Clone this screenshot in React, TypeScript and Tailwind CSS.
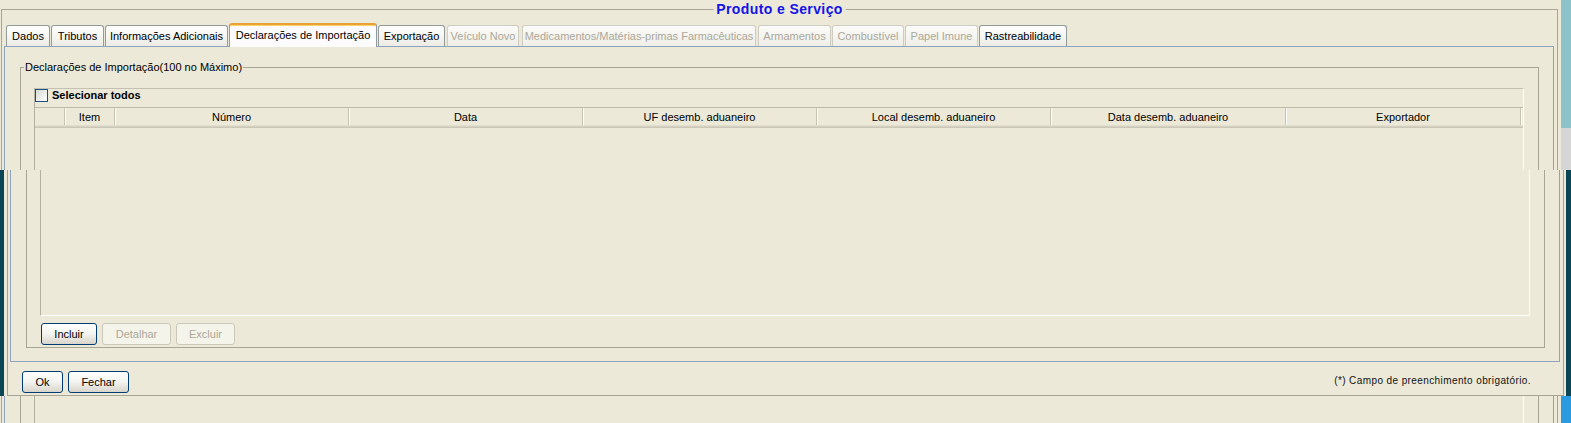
import { clsx } from "clsx"

const tabs = [
  { label: "Dados", cls: "ml-0 w-[44px]", state: "on" },
  { label: "Tributos", cls: "ml-px w-[53px]", state: "on" },
  { label: "Informações Adicionais", cls: "ml-px w-[123px]", state: "on" },
  { label: "Declarações de Importação", cls: "ml-px w-[148px]", state: "sel" },
  { label: "Exportação", cls: "ml-px w-[67px]", state: "on" },
  { label: "Veículo Novo", cls: "ml-[2px] w-[72px]", state: "off" },
  { label: "Medicamentos/Matérias-primas Farmacêuticas", cls: "ml-[3px] w-[234px]", state: "off" },
  { label: "Armamentos", cls: "ml-[2px] w-[73px]", state: "off" },
  { label: "Combustível", cls: "ml-px w-[72px]", state: "off" },
  { label: "Papel Imune", cls: "ml-px w-[73px]", state: "off" },
  { label: "Rastreabilidade", cls: "ml-px w-[88px]", state: "on" },
]

const columns = [
  { label: "", cls: "w-[30px]" },
  { label: "Item", cls: "w-[50px]" },
  { label: "Número", cls: "w-[234px]" },
  { label: "Data", cls: "w-[234px]" },
  { label: "UF desemb. aduaneiro", cls: "w-[234px]" },
  { label: "Local desemb. aduaneiro", cls: "w-[234px]" },
  { label: "Data desemb. aduaneiro", cls: "w-[235px]" },
  { label: "Exportador", cls: "w-[235px]" },
]

const font = "font-['Liberation_Sans',Arial,sans-serif] text-[11px] text-black"

function Tab({ label, cls, state }: { label: string; cls: string; state: string }) {
  if (state === "sel") {
    return (
      <div
        className={clsx(
          "relative -mb-px flex h-[24px] items-center justify-center rounded-t-[3px] border border-b-0 border-[#919b9c] border-t-2 border-t-[#e8a236] bg-[#fcfcfe] pb-[2px] shadow-[inset_0_1px_0_#ffd36a]",
          cls
        )}
      >
        {label}
      </div>
    )
  }
  return (
    <div
      className={clsx(
        "flex h-[21px] items-center justify-center rounded-t-[3px] border border-b-0",
        state === "on"
          ? "border-[#919b9c] bg-gradient-to-b from-white to-[#ecebe5] text-black"
          : "border-[#cfcdc2] bg-gradient-to-b from-[#fbfbf9] to-[#efeee8] text-[#aca899]",
        cls
      )}
    >
      {label}
    </div>
  )
}

function Button({ label, cls, disabled }: { label: string; cls: string; disabled?: boolean }) {
  return (
    <button
      className={clsx(
        "flex h-[22px] items-center justify-center rounded-[3px] border text-[11px]",
        disabled
          ? "border-[#cac8bb] bg-[#f5f4ea] text-[#aca899]"
          : "border-[#003c74] bg-gradient-to-b from-white via-[#f3f3ef] to-[#d8d5cb] text-black",
        cls
      )}
    >
      {label}
    </button>
  )
}

// the window at the back: only its top is seen, the rest runs off the page
function BackWindow() {
  return (
    <div className={clsx("flex h-[560px] w-[1561px] flex-col bg-[#ece9d8] pl-px pr-[3px] pt-[9px]", font)}>
      <div className="relative flex flex-1 flex-col border border-[#a7a596] pl-[2px] pr-[3px] pt-[13px]">
        <span className="absolute left-1/2 top-[-9px] -translate-x-1/2 bg-[#ece9d8] px-[3px] text-[14px] leading-[17px] font-bold tracking-[0.4px] text-[#1414e8]">
          Produto e Serviço
        </span>

        <div className="relative z-10 flex h-[23px] items-end pl-[2px]">
          {tabs.map((t) => (
            <Tab key={t.label} {...t} />
          ))}
        </div>

        <div className="flex flex-1 flex-col border border-[#8fa3bd] pl-[15px] pr-[14px] pt-[20px]">
          <div className="relative flex flex-1 flex-col border border-[#a7a596] pl-[13px] pr-[14px] pt-[20px]">
            <span className="absolute left-[3px] top-[-8px] bg-[#ece9d8] px-px leading-[14px]">
              Declarações de Importação(100 no Máximo)
            </span>

            <div className="flex flex-1 flex-col border border-t-[#c4c1b2] border-l-[#b3b0a1] border-r-white border-b-white">
              <div className="flex h-[18px] items-start">
                <div className="h-[13px] w-[13px] border border-[#1c5180] bg-gradient-to-br from-[#d8d8d2] to-white" />
                <span className="ml-[4px] font-bold leading-[13px]">Selecionar todos</span>
              </div>
              <div className="flex flex-col border-t border-[#bdbaab]">
                <div className="flex h-[17px]">
                  {columns.map((c, i) => (
                    <div
                      key={i}
                      className={clsx(
                        "flex items-center justify-center border-r border-[#c6c3b3] pt-px shadow-[1px_0_0_#fff]",
                        c.cls
                      )}
                    >
                      {c.label}
                    </div>
                  ))}
                </div>
                <div className="h-[3px] border-t border-[#e2decd] bg-[#d6d2c2] shadow-[inset_0_-1px_0_#cbc7b8]" />
              </div>
              <div className="flex-1" />
            </div>
          </div>
        </div>
      </div>
    </div>
  )
}

// the window in front: only its lower part got painted
function FrontWindowLower() {
  return (
    <div className={clsx("ml-[4px] flex h-full w-[1562px] flex-col bg-[#ece9d8] pl-[3px] pr-[2px]", font)}>
      <div className="flex flex-1 flex-col border border-t-0 border-[#a7a596] pl-[2px] pr-[3px] pb-[2px]">
        <div className="flex flex-1 flex-col border border-t-0 border-[#8fa3bd] pl-[15px] pr-[14px] pb-[13px]">
          <div className="flex flex-1 flex-col border border-t-0 border-[#a7a596] pl-[13px] pr-[14px] pb-[2px]">
            <div className="flex-1 border border-t-0 border-l-[#b3b0a1] border-r-white border-b-white" />

            <div className="mt-[7px] flex pl-px">
              <Button label="Incluir" cls="w-[56px]" />
              <Button label="Detalhar" cls="ml-[5px] w-[69px]" disabled />
              <Button label="Excluir" cls="ml-[5px] w-[59px]" disabled />
            </div>
          </div>
        </div>

        <div className="mt-[9px] flex h-[22px] items-center pl-[12px] pr-[29px]">
          <Button label="Ok" cls="w-[41px]" />
          <Button label="Fechar" cls="ml-[5px] w-[61px]" />
          <span className="ml-auto pb-[3px] text-[10px] tracking-[0.4px] text-[#111]">
            (*) Campo de preenchimento obrigatório.
          </span>
        </div>
      </div>
    </div>
  )
}

export default function App() {
  return (
    <div className="relative h-[423px] w-[1571px] overflow-hidden">
      {/* desktop behind the windows */}
      <div className="flex h-full flex-col">
        <div className="h-[128px] bg-gradient-to-r from-[#4f929c] to-[#8cc3ca]" />
        <div className="h-[42px] bg-gradient-to-r from-[#a9a9a9] to-[#d6d6d6]" />
        <div className="h-[226px] bg-[#0b4656]" />
        <div className="flex-1 bg-gradient-to-r from-[#1a86cf] to-[#2a9be0]" />
      </div>

      <div className="absolute left-0 top-0">
        <BackWindow />
      </div>

      <div className="absolute left-0 top-[170px] h-[226px] w-full bg-[#0b4656]">
        <FrontWindowLower />
      </div>
    </div>
  )
}
